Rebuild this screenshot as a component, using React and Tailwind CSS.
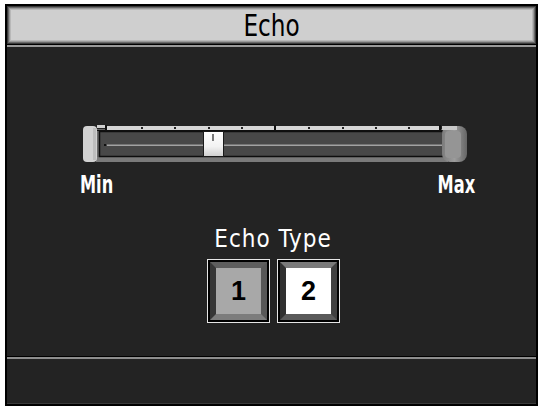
import React from "react";

const narrow = { fontFamily: '"Liberation Sans Narrow", "DejaVu Sans Condensed", "Liberation Sans", sans-serif' };

function SliderGraphic() {
  const dots = [59, 92, 126, 159, 226, 260, 293, 326];
  return (
    <svg width="386" height="38" viewBox="0 0 386 38" className="block">
      <defs>
        <linearGradient id="thumb" x1="0" y1="0" x2="0" y2="1">
          <stop offset="0" stopColor="#ffffff" />
          <stop offset="0.6" stopColor="#f2f2f2" />
          <stop offset="1" stopColor="#cfcfcf" />
        </linearGradient>
        <linearGradient id="rcap" x1="0" y1="0" x2="1" y2="0">
          <stop offset="0" stopColor="#7c7c7c" />
          <stop offset="0.5" stopColor="#9c9c9c" />
          <stop offset="1" stopColor="#666666" />
        </linearGradient>
      </defs>
      {/* body */}
      <rect x="14" y="4" width="352" height="33" fill="#6a6a6a" />
      <rect x="14" y="32" width="352" height="5" fill="#7a7a7a" />
      {/* top strip */}
      <rect x="15" y="0" width="9" height="3" fill="#cfcfcf" />
      <rect x="24" y="1" width="334" height="4" fill="#d6d6d6" />
      <rect x="14" y="5" width="356" height="1" fill="#111" />
      {/* groove */}
      <rect x="17.5" y="6.5" width="351" height="25" fill="#484848" stroke="#0e0e0e" strokeWidth="1.5" />
      <rect x="25" y="19.5" width="341" height="1.5" fill="#a2a2a2" />
      <rect x="22" y="19" width="2" height="2" fill="#111" />
      {/* ticks */}
      <rect x="23" y="0" width="2" height="6" fill="#111" />
      <rect x="192" y="0" width="2" height="6" fill="#111" />
      <rect x="357" y="0" width="2" height="6" fill="#111" />
      {dots.map((x) => (
        <rect key={x} x={x} y="2" width="2" height="2" fill="#222" />
      ))}
      {/* left cap */}
      <rect x="1" y="1" width="14" height="36" rx="4" fill="#d2d2d2" />
      <rect x="11" y="3" width="3" height="32" fill="#bdbdbd" />
      {/* right cap */}
      <rect x="360" y="1" width="25" height="36" rx="8" fill="url(#rcap)" />
      <rect x="360" y="1" width="15" height="4" fill="#c9c9c9" />
      <rect x="363" y="6" width="16" height="27" rx="4" fill="#959595" />
      {/* thumb */}
      <rect x="121.5" y="6.5" width="20" height="25" fill="url(#thumb)" stroke="#1a1a1a" strokeWidth="1" />
      <rect x="130" y="9" width="2" height="7" fill="#7a7a7a" />
    </svg>
  );
}

function Btn({ label, face, top, left, right, bottom }) {
  return (
    <div className="w-[63px] h-[64px] border border-[#e6e6e6] bg-black p-[2px]">
      <div
        className={`w-full h-full border-[6px] ${top} ${left} ${right} ${bottom} ${face} flex items-center justify-center`}
      >
        <span
          className="text-[27px] font-bold text-black leading-none"
          style={{ fontFamily: '"Liberation Sans", Arial, sans-serif' }}
        >
          {label}
        </span>
      </div>
    </div>
  );
}

export default function App() {
  return (
    <div className="w-[543px] h-[409px] bg-white pt-[4px] pl-[5px]">
      <div className="w-[533px] h-[402px] border-2 border-black bg-[#232323] flex flex-col">
        {/* header */}
        <div className="h-[38px] bg-[#cfcfcf] shadow-[inset_1px_1px_0_#3a3a3a,inset_-1px_-1px_0_#3a3a3a,inset_2px_2px_0_#6a6a6a,inset_-2px_-2px_0_#6a6a6a,inset_3px_3px_0_#999999,inset_-3px_-3px_0_#999999,inset_4px_4px_0_#b8b8b8,inset_-4px_-4px_0_#b8b8b8] flex items-center justify-center">
          <span className="inline-block text-[28px] leading-none text-black mt-[1px] scale-x-[0.92] scale-y-[1.08]" style={narrow}>
            Echo
          </span>
        </div>
        <div className="h-[1px] bg-black" />
        <div className="h-[2px] bg-[#9a9a9a]" />

        {/* main */}
        <div className="h-[309px] flex flex-col">
          <div className="ml-[75px] mt-[78px]">
            <SliderGraphic />
          </div>
          <div className="ml-[73px] w-[395px] mt-[9px] flex justify-between text-white text-[25px] leading-none font-bold" style={narrow}>
            <span className="inline-block origin-left scale-x-[0.72]">Min</span>
            <span className="inline-block origin-right scale-x-[0.72]">Max</span>
          </div>
          <div className="mt-[30px] flex justify-center pl-[3px] text-white text-[24px] leading-none tracking-[1px]" style={narrow}>
            Echo Type
          </div>
          <div className="mt-[8px] flex justify-center gap-[7px] pl-[4px]">
            <Btn
              label="1"
              face="bg-[#a8a8a8]"
              top="border-t-[#5e5e5e]"
              left="border-l-[#363636]"
              right="border-r-[#585858]"
              bottom="border-b-[#7c7c7c]"
            />
            <Btn
              label="2"
              face="bg-white"
              top="border-t-[#7a7a7a]"
              left="border-l-[#303030]"
              right="border-r-[#404040]"
              bottom="border-b-[#5a5a5a]"
            />
          </div>
        </div>

        {/* separator */}
        <div className="h-[1px] bg-black" />
        <div className="h-[2px] bg-[#8e8e8e]" />
        <div className="flex-1 bg-[#232323] border-b border-[#3a3a3a]" />
      </div>
    </div>
  );
}
